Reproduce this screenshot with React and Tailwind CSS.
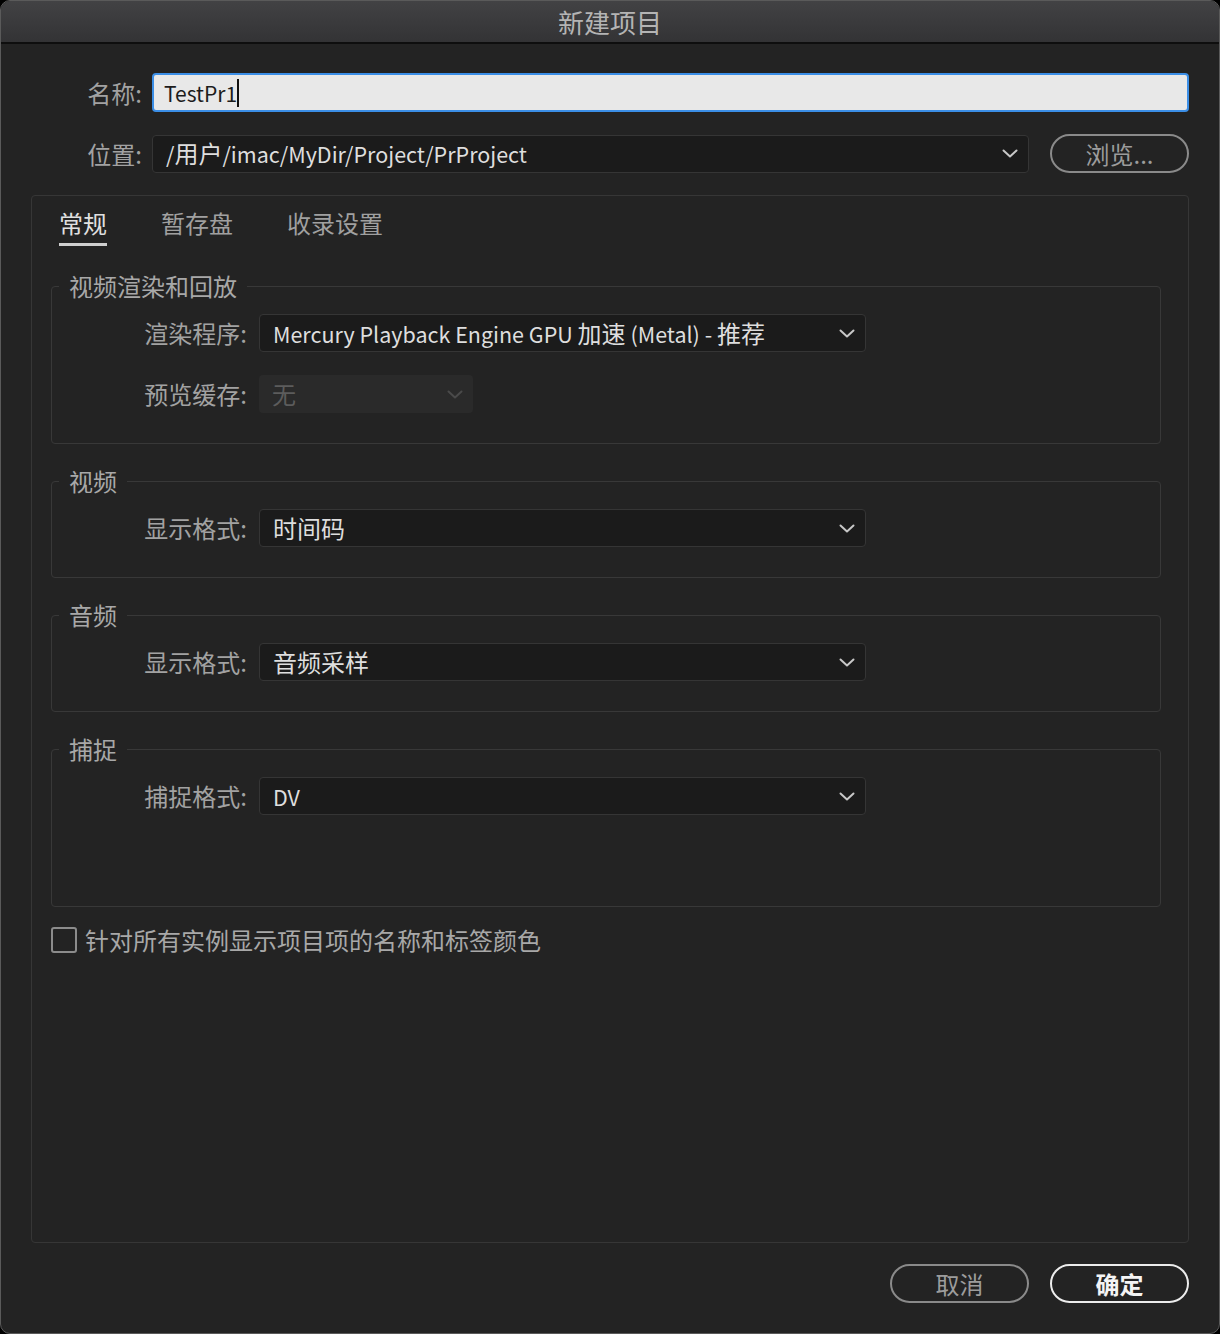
const FONT = "font-['Noto_Sans_CJK_SC','Noto_Sans',sans-serif]";

// Latin runs are set a touch smaller than the CJK glyphs, as in the original dialog
function L({ children }) {
  return <span className="text-[21.5px]">{children}</span>;
}

function Chevron({ className = '' }) {
  return (
    <svg width="16" height="9" viewBox="0 0 16 9" className={className}>
      <path d="M1.5 1.5 L8 7.5 L14.5 1.5" fill="none" stroke="currentColor" strokeWidth="2" strokeLinecap="round" strokeLinejoin="round" />
    </svg>
  );
}

function Select({ children, width = 'w-[607px]', disabled = false }) {
  return (
    <div
      className={`${width} h-[38px] rounded-[4px] flex items-center pl-[13px] pr-[10px] ${
        disabled ? 'bg-[#2a2a2a] text-[#5c5c5c]' : 'bg-[#1b1b1b] border border-[#353535] text-[#dedede]'
      }`}
    >
      <span className="flex-1 text-[24px] leading-[30px] whitespace-nowrap">{children}</span>
      <Chevron className={disabled ? 'text-[#4a4a4a]' : 'text-[#c8c8c8]'} />
    </div>
  );
}

function Row({ label, children, className = '' }) {
  return (
    <div className={`flex items-center ${className}`}>
      <span className="w-[195px] text-right text-[24px] leading-[30px] text-[#a2a2a2]">{label}</span>
      <div className="ml-[12px]">{children}</div>
    </div>
  );
}

function Group({ title, children, pb = 'pb-[30px]', className = '' }) {
  return (
    <fieldset className={`border border-[#383838] rounded-[4px] pt-[14px] ${pb} ${className}`}>
      <legend className="ml-[7px] px-[10px] text-[24px] leading-[28px] text-[#a8a8a8]">{title}</legend>
      {children}
    </fieldset>
  );
}

function PillButton({ label, primary = false }) {
  return (
    <button
      className={`w-[139px] h-[39px] rounded-full border-2 text-[24px] leading-[30px] ${
        primary ? 'border-[#ececec] text-[#f4f4f4] font-semibold' : 'border-[#8a8a8a] text-[#9c9c9c]'
      }`}
    >
      {label}
    </button>
  );
}

export default function App() {
  return (
    <div className={`w-[1220px] h-[1334px] bg-black ${FONT}`}>
      <div className="h-full border border-[#5a5a5a] rounded-[10px] overflow-hidden bg-[#232323] flex flex-col">
        {/* Title bar */}
        <div className="h-[43px] shrink-0 bg-gradient-to-b from-[#424244] to-[#333335] border-b-2 border-[#0e0e0e] flex items-center justify-center">
          <span className="text-[26px] leading-[30px] text-[#b4b4b4]">新建项目</span>
        </div>

        <div className="px-[30px] flex flex-col">
          {/* Name */}
          <div className="flex items-center mt-[29px]">
            <span className="w-[111px] text-right text-[24px] leading-[30px] text-[#a2a2a2]">名称:</span>
            <div className="ml-[10px] flex-1 h-[39px] rounded-[4px] bg-[#e8e8e8] border-2 border-[#3b8ee6] flex items-center pl-[10px]">
              <span className="text-[21px] leading-[30px] text-[#1c1c1c]">TestPr1</span>
              <span className="w-[2px] h-[28px] bg-[#111]" />
            </div>
          </div>

          {/* Location */}
          <div className="flex items-center mt-[22px]">
            <span className="w-[111px] text-right text-[24px] leading-[30px] text-[#a2a2a2]">位置:</span>
            <div className="ml-[10px] flex-1 h-[38px] rounded-[4px] bg-[#1b1b1b] border border-[#353535] flex items-center pl-[13px] pr-[10px]">
              <span className="flex-1 text-[24px] leading-[30px] text-[#dedede]">
                <L>/</L>用户<L>/imac/MyDir/Project/PrProject</L>
              </span>
              <Chevron className="text-[#c8c8c8]" />
            </div>
            <div className="ml-[21px]">
              <PillButton label="浏览..." />
            </div>
          </div>

          {/* Main panel */}
          <div className="mt-[22px] h-[1048px] border border-[#363636] rounded-[4px] flex flex-col">
            <div className="flex gap-[54px] pl-[27px] pt-[12px]">
              {['常规', '暂存盘', '收录设置'].map((t, i) => (
                <div key={t} className="flex flex-col">
                  <span className={`text-[24px] leading-[30px] ${i === 0 ? 'text-[#e0e0e0]' : 'text-[#a0a0a0]'}`}>{t}</span>
                  <span className={`mt-[5px] h-[3px] ${i === 0 ? 'bg-[#cfcfcf]' : 'bg-transparent'}`} />
                </div>
              ))}
            </div>

            <div className="mt-[26px] ml-[19px] mr-[27px] flex flex-col">
              <Group title="视频渲染和回放">
                <Row label="渲染程序:">
                  <Select>
                    <L>Mercury Playback Engine GPU </L>加速<L> (Metal) - </L>推荐
                  </Select>
                </Row>
                <Row label="预览缓存:" className="mt-[23px]">
                  <Select width="w-[214px]" disabled>无</Select>
                </Row>
              </Group>

              <Group title="视频" className="mt-[23px]">
                <Row label="显示格式:">
                  <Select>时间码</Select>
                </Row>
              </Group>

              <Group title="音频" className="mt-[23px]">
                <Row label="显示格式:">
                  <Select>音频采样</Select>
                </Row>
              </Group>

              <Group title="捕捉" className="mt-[23px]" pb="pb-[91px]">
                <Row label="捕捉格式:">
                  <Select><L>DV</L></Select>
                </Row>
              </Group>

              <label className="mt-[18px] flex items-center gap-[8px]">
                <span className="w-[26px] h-[26px] rounded-[3px] border-2 border-[#8c8c8c]" />
                <span className="text-[24px] leading-[30px] text-[#a8a8a8]">针对所有实例显示项目项的名称和标签颜色</span>
              </label>
            </div>
          </div>

          {/* Footer buttons */}
          <div className="mt-[21px] flex justify-end gap-[21px]">
            <PillButton label="取消" />
            <PillButton label="确定" primary />
          </div>
        </div>
      </div>
    </div>
  );
}
